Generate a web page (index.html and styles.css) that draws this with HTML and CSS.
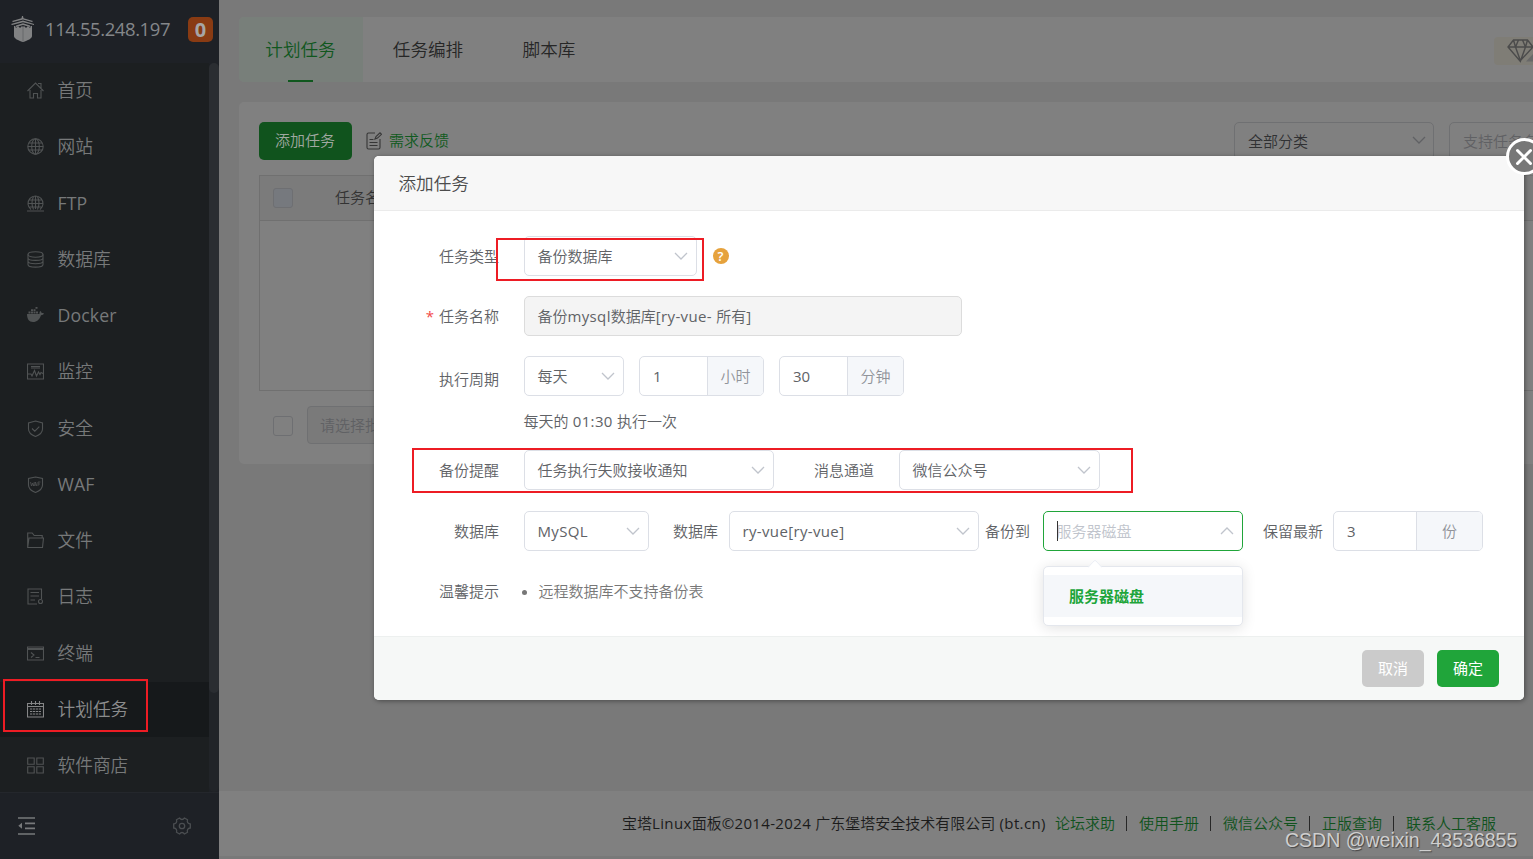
FILE: index.html
```html
<!DOCTYPE html>
<html lang="zh-CN">
<head>
<meta charset="utf-8">
<title>计划任务</title>
<link rel="stylesheet" href="styles.css">
</head>
<body>
<div class="app">
  <aside class="sidebar">
    <header class="side-head">
      <svg class="logo" width="24" height="26" viewBox="0 0 24 26" fill="#818283"><path d="M11 0h1l.5 2.200L22 5l-1 1-9-2.400L2 6 1 5l9.500-2.800zM12 4.500 23 8v1L12 6.200 1 9 0 8zM12 7.300l7 2.200V11l-7-2-7 2V9.500z"/><path d="M3 10h1.500v1.500H6V10.500h2v1h2v-1h4v1h2v-1h2v1h1.500V10H21v10c0 2.500-4 4.500-9 6-5-1.500-9-3.500-9-6z"/><path d="M12 11v14" stroke="#66696b"/></svg>
      <span class="ip">114.55.248.197</span><span class="badge">0</span>
    </header>
    <div class="side-mid">
      <nav class="menu">
        <a class="item"><svg viewBox="0 0 17 17"><path d="M.5 9 8.500 1 16.500 9M3 8v8h3.500v-4.500h4V16H14V8M11 1.500h3V6"/></svg><span>首页</span></a>
        <a class="item"><svg viewBox="0 0 17 17"><circle cx="8.500" cy="8.500" r="7.700"/><ellipse cx="8.500" cy="8.500" rx="3.800" ry="7.700"/><path d="M8.500 1v15M1 8.500h15M2 5h13M2 12h13"/></svg><span>网站</span></a>
        <a class="item"><svg viewBox="0 0 17 17"><path d="M4 14.500A7.500 7.500 0 1 1 13 14.500M6.500 14.500Q3.500 8 6.500 1.500M10.500 14.500Q13.500 8 10.500 1.500M8.500 1v13M1 8.500h15M2.500 5h12M2.500 12h12M0 16h17"/></svg><span class="latin">FTP</span></a>
        <a class="item"><svg viewBox="0 0 17 17"><ellipse cx="8.500" cy="3.500" rx="7.500" ry="2.700"/><path d="M1 3.500v10c0 3.500 15 3.500 15 0v-10M1 7c0 3.200 15 3.200 15 0M1 10.300c0 3.200 15 3.200 15 0"/></svg><span>数据库</span></a>
        <a class="item"><svg viewBox="0 0 17 17" class="solid"><path d="M0 7h12.500c0-1.500 0-2 .8-3 1 .7 1.200 1.200 1.300 2 1 0 1.800 0 2.400.5-.6 1.200-1.500 1.700-3 1.700C12.500 12.500 10 15 6 15 2 15 0 12 0 7zM1.500 4.500h2v2h-2zM4 4.500h2v2H4zM6.500 4.500h2v2h-2zM9 4.500h2v2H9zM4 2.200h2v1.800H4zM6.500 2.200h2v1.800h-2zM8.500 0h2v1.800h-2z"/></svg><span class="latin">Docker</span></a>
        <a class="item"><svg viewBox="0 0 17 17"><path d="M.5 1h16v15H.5zM4 3.500h9M4 5h9M1 11h3l1 2 2.500-5.500L9.500 13l2-4 1.500 2.500L14 9.500l2 1"/></svg><span>监控</span></a>
        <a class="item"><svg viewBox="0 0 17 17"><path d="M8.500 1 15.500 3v6c0 4-3 6-7 7.500C4.500 15 1.500 13 1.500 9V3zM5 8.500l2.800 2.700 4.500-4.500"/></svg><span>安全</span></a>
        <a class="item"><svg viewBox="0 0 17 17"><path d="M8.500 1 15.500 2.500V9c0 4-3 6-7 7.500C4.500 15 1.500 13 1.500 9V2.500z"/><path class="thin" d="m3.500 6 1 4 1-3 1 3 .8-4M7.500 10l1-4 1.200 4M8 9h1.500M11 10V6h2.500M11 8h2"/></svg><span class="latin">WAF</span></a>
        <a class="item"><svg viewBox="0 0 17 17"><path d="M.7 15.500V1h4.500l2 2.500h8V6M.7 15.500 2 6h14.500L15.500 15.500z"/></svg><span>文件</span></a>
        <a class="item"><svg viewBox="0 0 17 17"><path d="M10 16H1V1h13.500v10M3.500 4.500H12M3.500 8H12M3.500 12H8"/><circle cx="13.500" cy="13.500" r="2"/></svg><span>日志</span></a>
        <a class="item"><svg viewBox="0 0 17 17"><path d="M.5 2h16v13H.5zM.5 3.500h16M.5 4.500h16M4 7.500 7 10l-3 2.500M8.500 12.500h4"/></svg><span>终端</span></a>
        <a class="item active"><svg viewBox="0 0 17 17"><path d="M.5 2.500h16v13.500H.5zM.5 5.500h16M4.500 0v4M8.500 0v4M12.500 0v4"/><path d="M3 8h11M3 10.500h11M3 13h11" stroke-dasharray="2.300 .7"/></svg><span>计划任务</span></a>
        <a class="item"><svg viewBox="0 0 17 17"><path d="M.7 1h6.500v6.300H.7zM9.800 1h6.500v6.300H9.800zM.7 9.700h6.500V16H.7zM9.800 9.700h6.500V16H9.800z"/></svg><span>软件商店</span></a>
      </nav>
      <div class="track"><div class="thumb"></div></div>
    </div>
    <footer class="side-foot">
      <svg width="17" height="18" viewBox="0 0 17 18" fill="none" stroke="#77797b" stroke-width="1.700"><path d="M0 1h17M7 6.300h10M7 11.300h10M0 17h17"/><path d="M4 5.800v6L.3 8.800z" fill="#77797b" stroke="none"/></svg>
      <svg width="18" height="18" viewBox="0 0 18 18" fill="none" stroke="#4b4e51" stroke-width="1.300"><path d="M6.500 1q2.500 3 5 0l3 1.700q-1 3.800 2.800 4.300v4q-3.800.5-2.800 4.300l-3 1.700q-2.500-3-5 0l-3-1.700Q4.500 11.500.7 11V7q3.800-.5 2.800-4.300z"/><circle cx="9" cy="9" r="2.700"/></svg>
    </footer>
  </aside>

  <main class="main">
    <section class="tabs">
      <a class="tab on">计划任务</a><a class="tab">任务编排</a><a class="tab">脚本库</a>
      <div class="vip"><svg width="28" height="24" viewBox="0 0 28 24" fill="none" stroke="#4b4b4b" stroke-width="1.400"><path d="M6.500 1h14l5.500 7-13 14L1 8zM1 8h25M6.500 1l2 7L13.500 22 18.500 8l2-7M8.500 8l3-7M18.500 8l-3-7"/><path d="M28 13v9.500h-9z" fill="#686868" stroke="none"/></svg></div>
    </section>
    <section class="card">
      <div class="tools">
        <button class="add">添加任务</button>
        <svg class="note" width="16" height="18" viewBox="0 0 16 18" fill="none" stroke="#363636" stroke-width="1.100"><path d="M9 1H2.500Q1 1 1 2.500v13Q1 17 2.500 17h10q1.500 0 1.500-1.500V7M3.500 7.500h4M3.500 10.500h8M3.500 13.500h8M9 7l1-2.500L14 .8l1.500 1.500-4 3.800z"/></svg>
        <a class="feedback">需求反馈</a>
        <div class="filter">全部分类<svg class="arrow" viewBox="0 0 14 8"><path d="m1 1 6 6 6-6"/></svg></div>
        <div class="search">支持任务名</div>
      </div>
      <div class="table"><div class="thead"><i class="check tint"></i><span>任务名称</span></div></div>
      <div class="batch"><i class="check"></i><div class="batch-select">请选择批量操作</div></div>
    </section>
    <footer class="foot">
      <span class="copy">宝塔<span class="latin">Linux</span>面板<span class="latin">©2014-2024 </span>广东堡塔安全技术有限公司<span class="latin"> (bt.cn)</span></span>
      <a>论坛求助</a><i></i><a>使用手册</a><i></i><a>微信公众号</a><i></i><a>正版查询</a><i></i><a>联系人工客服</a>
    </footer>
  </main>
</div>

<div class="modal">
  <h2 class="modal-head">添加任务</h2>
  <div class="modal-body">
    <div class="row"><label class="label">任务类型</label><div class="select w173">备份数据库<svg class="arrow" viewBox="0 0 14 8"><path d="m1 1 6 6 6-6"/></svg></div><span class="help">?</span></div>
    <div class="row"><label class="label"><b class="req">*</b>任务名称</label><div class="select w438 disabled"><span>备份<span class="latin">mysql</span>数据库<span class="latin">[ry-vue- </span>所有<span class="latin">]</span></span></div></div>
    <div class="row cycle"><label class="label low">执行周期</label><div class="select w100">每天<svg class="arrow" viewBox="0 0 14 8"><path d="m1 1 6 6 6-6"/></svg></div><div class="number"><span class="value">1</span><span class="unit">小时</span></div><div class="number"><span class="value">30</span><span class="unit">分钟</span></div></div>
    <p class="hint">每天的<span class="latin"> 01:30 </span>执行一次</p>
    <div class="row notify"><label class="label">备份提醒</label><div class="select w250">任务执行失败接收通知<svg class="arrow" viewBox="0 0 14 8"><path d="m1 1 6 6 6-6"/></svg></div><label class="label w100">消息通道</label><div class="select w201">微信公众号<svg class="arrow" viewBox="0 0 14 8"><path d="m1 1 6 6 6-6"/></svg></div></div>
    <div class="row"><label class="label">数据库</label><div class="select w125"><span class="latin">MySQL</span><svg class="arrow" viewBox="0 0 14 8"><path d="m1 1 6 6 6-6"/></svg></div><span class="inline-label first">数据库</span><div class="select w250"><span class="latin">ry-vue[ry-vue]</span><svg class="arrow" viewBox="0 0 14 8"><path d="m1 1 6 6 6-6"/></svg></div><span class="inline-label second">备份到</span>
      <div class="select w200 open"><i class="caret"></i>服务器磁盘<svg class="arrow" viewBox="0 0 14 8"><path d="m1 7 6-6 6 6"/></svg>
        <div class="dropdown"><svg class="tip" viewBox="0 0 14 8"><path d="M0 7.500 6 1q1-1 2 0l6 6.500" /></svg><div class="option">服务器磁盘</div></div>
      </div>
      <span class="inline-label third">保留最新</span><div class="number wide"><span class="value">3</span><span class="unit">份</span></div></div>
    <div class="row"><label class="label">温馨提示</label><ul class="notes"><li>远程数据库不支持备份表</li></ul></div>
  </div>
  <div class="modal-foot"><button class="btn cancel">取消</button><button class="btn ok">确定</button></div>
  <div class="close"><svg width="18" height="18" viewBox="0 0 18 18"><path d="m2.500 2.500 13 13M15.500 2.500l-13 13" stroke="#fff" stroke-width="3" stroke-linecap="round"/></svg></div>
</div>

<div class="mark mark-menu"></div>
<div class="mark mark-type"></div>
<div class="mark mark-notify"></div>
<div class="watermark">CSDN @weixin_43536855</div>
</body>
</html>
```
FILE: styles.css
```css
* { box-sizing: border-box; }
body { margin: 0; width: 1533px; height: 859px; overflow: hidden; position: relative; background: #797979; font: 15px/20px "Open Sans", "Noto Sans CJK SC", sans-serif; font-weight: 350; color: #606266; }
button { border: 0; padding: 0; font: inherit; }
.latin { font-weight: 400; white-space: pre; letter-spacing: .35px; }
.app { display: flex; width: 1533px; height: 859px; overflow: hidden; }

.sidebar { width: 219px; flex: none; display: flex; flex-direction: column; background: #1e2126; }
.side-head { height: 63px; padding: 0 6px 5px 11px; display: flex; align-items: center; color: #84878a; font-size: 18.500px; }
.logo { margin-right: 10px; flex: none; }
.ip { width: 143px; white-space: nowrap; letter-spacing: -.42px; font-weight: 400; }
.badge { width: 25px; height: 25px; border-radius: 5px; background: #893b13; color: #a6a6a6; font-size: 20px; font-weight: 700; line-height: 25px; text-align: center; }
.side-mid { height: 729px; display: flex; overflow: hidden; }
.menu { width: 209px; background: #1c1f21; display: flex; flex-direction: column; gap: 1.250px; }
.item { height: 55px; flex: none; padding-left: 27px; display: flex; align-items: center; gap: 13.500px; font-size: 17.700px; color: #77797a; white-space: nowrap; }
.item span { margin-top: -1px; }
.item .latin { letter-spacing: .1px; }
.item svg { width: 17px; height: 17px; fill: none; stroke: #505354; stroke-width: 1.100; }
.item svg.solid { fill: #505354; stroke: none; }
.item .thin { stroke-width: .8; }
.item.active { background: #16191b; color: #8b8c8d; }
.item.active svg { stroke: #858687; }
.track { width: 10px; background: #212428; border-radius: 5px; }
.thumb { height: 630px; background: #2a2d31; border-radius: 5px; }
.side-foot { height: 67px; border-top: 1px solid #24272c; padding: 0 28px 0 18px; display: flex; align-items: center; justify-content: space-between; }

.main { flex: none; width: 1340px; display: flex; flex-direction: column; }
.tabs { height: 65px; margin: 17px 0 0 20px; display: flex; background: #808080; border-radius: 5px; font-size: 17.600px; color: #262626; }
.tab { width: 130px; display: flex; align-items: center; justify-content: center; padding-bottom: 2px; }
.tab:nth-child(3) { width: 112px; }
.tab.on { width: 124px; padding-right: 1px; color: #10571e; border-radius: 5px 0 0 5px; background: linear-gradient(#10571e, #10571e) 49px 63px / 25px 2px no-repeat #787f7a; }
.vip { margin: 20px 0 0 889px; width: 60px; height: 28px; border-radius: 4px; background: #7f7d76; padding: 2px 0 0 13px; }
.card { height: 362px; margin: 20px 0 0 20px; padding: 20px; background: #808080; border-radius: 5px; }
.tools { display: flex; align-items: center; height: 38px; white-space: nowrap; }
.tools > * { flex: none; }
.add { width: 93px; height: 38px; border-radius: 5px; background: #10531d; color: #a0a8a1; padding: 0 1px 2px 0; }
.note { margin-left: 14px; }
.feedback { width: 60px; color: #105a20; margin-left: 7px; padding-bottom: 2px; }
.filter { margin-left: 785px; width: 200px; height: 38px; border: 1px solid #6f7072; border-radius: 5px; padding: 0 7px 0 13px; display: flex; align-items: center; justify-content: space-between; color: #303133; }
.filter .arrow { stroke: #606164; margin-top: -2px; }
.search { margin-left: 15px; width: 200px; height: 38px; border: 1px solid #6f7072; border-radius: 5px; padding: 8px 13px; color: #606164; }
.table { margin-top: 15px; height: 216px; border: 1px solid #707070; }
.thead { height: 45px; background: #7b7b7b; border-bottom: 1px solid #707070; display: flex; align-items: center; padding-left: 13px; gap: 42px; color: #333; }
.thead span { margin-top: -2px; }
.check { width: 20px; height: 20px; border: 1px solid #6e6f72; border-radius: 3px; }
.check.tint { background: #76797e; }
.batch { margin-top: 15px; display: flex; align-items: center; gap: 14px; padding-left: 14px; }
.batch .check { margin-top: 2px; }
.batch-select { width: 160px; height: 38px; border: 1px solid #6f7072; border-radius: 4px; padding: 8px 12px; background: #7a7a7a; color: #606164; }
.foot { margin-top: 327px; height: 65px; background: #808080; padding: 0 0 1px 403px; display: flex; align-items: center; color: #1b1b1b; white-space: nowrap; }
.copy { margin-right: 10px; width: 423px; }
.foot a { color: #10531d; }
.foot i { width: 1px; height: 15px; background: #272727; margin: 0 12px 0 11px; }

.modal { position: absolute; left: 374px; top: 156px; width: 1150px; height: 544px; display: flex; flex-direction: column; background: #fff; border-radius: 5px; box-shadow: 1px 1px 5px rgba(0,0,0,.4); }
.modal-head { margin: 0; height: 55px; padding-left: 24.500px; background: #f7f7f7; border-bottom: 1px solid #ebebeb; border-radius: 5px 5px 0 0; font-size: 17.600px; line-height: 54px; font-weight: 350; color: #4c4c4c; }
.modal-body { flex: 1; padding-top: 25px; }
.row { height: 40px; margin-bottom: 20px; display: flex; align-items: center; white-space: nowrap; }
.row.cycle { margin-bottom: 0; }
.row.notify { margin-bottom: 21px; }
.label { width: 125px; margin-right: 25px; text-align: right; flex: none; }
.label.w100 { width: 100px; }
.label.low { padding-top: 6px; }
.req { color: #f34848; font-weight: 400; margin-right: 5px; }
.select { position: relative; flex: none; height: 40px; border: 1px solid #dcdfe6; border-radius: 5px; padding: 0 8px 0 12.500px; display: flex; align-items: center; justify-content: space-between; }
.w100 { width: 100px; } .w125 { width: 125px; } .w173 { width: 173px; } .w200 { width: 200px; } .w201 { width: 201px; } .w250 { width: 250px; } .w438 { width: 438px; }
.arrow { width: 14px; height: 8px; fill: none; stroke: #c0c4cc; stroke-width: 1.300; }
.disabled { background: #f4f4f4; border-color: #dcdcdc; }
.help { width: 16px; height: 16px; margin-left: 15.500px; border-radius: 50%; background: #e6a23c; color: #fff; font-size: 13px; font-weight: 600; line-height: 16px; text-align: center; }
.number { width: 125px; height: 40px; margin-left: 15px; display: flex; border: 1px solid #dcdfe6; border-radius: 5px; overflow: hidden; line-height: 38px; }
.value { flex: 1; padding-left: 13px; font-weight: 400; }
.unit { width: 56px; background: #f5f7fa; border-left: 1px solid #dcdfe6; color: #909399; text-align: center; }
.number.wide { width: 150px; margin: 0; }
.wide .unit { width: 66px; }
.hint { margin: 0 0 4px 149.500px; height: 50px; line-height: 50px; }
.inline-label { flex: none; }
.first { width: 56px; margin-left: 24px; }
.second { width: 58px; margin-left: 6px; }
.third { width: 70px; margin-left: 20px; }
.open { border-color: #20a53a; color: #c0c4cc; }
.caret { position: absolute; left: 13px; top: 9px; width: 1px; height: 20px; background: #333; }
.dropdown { position: absolute; left: -1px; top: 54px; width: 200px; height: 60px; padding-top: 8px; background: #fff; border: 1px solid #e4e7ed; border-radius: 5px; box-shadow: 0 2px 14px rgba(0,0,0,.12); }
.option { height: 42px; background: #f5f7fa; color: #20a53a; font-weight: 700; line-height: 42px; padding-left: 25px; }
.tip { position: absolute; left: 44px; top: -7px; width: 14px; height: 8px; fill: #fff; stroke: #ebeef5; }
.notes { margin: 0; padding-left: 14.500px; color: #777; }
.modal-foot { height: 64px; border-top: 1px solid #edf0ef; background: #f6f8f7; border-radius: 0 0 5px 5px; display: flex; justify-content: flex-end; gap: 13px; padding: 13px 25px 0 0; }
.btn { width: 62px; height: 37px; border-radius: 5px; color: #fff; font-weight: 400; padding-bottom: 1px; }
.cancel { background: #cbcbcb; }
.ok { background: #20a53a; }
.close { position: absolute; left: 1132px; top: -18px; width: 37px; height: 37px; border: 3px solid #fff; border-radius: 50%; background: #777; display: flex; align-items: center; justify-content: center; }
.close svg { margin-left: -1px; }

.mark { position: absolute; border: 2px solid #ed1c24; }
.mark-menu { left: 3px; top: 679px; width: 145px; height: 53px; }
.mark-type { left: 496px; top: 238px; width: 208px; height: 43px; }
.mark-notify { left: 412px; top: 448px; width: 721px; height: 45px; }
.watermark { position: absolute; left: 1285px; top: 828px; font: 19.500px/24px "Liberation Sans", sans-serif; color: #cfcfcf; text-shadow: 1px 1px 1px #444; white-space: nowrap; }
```
